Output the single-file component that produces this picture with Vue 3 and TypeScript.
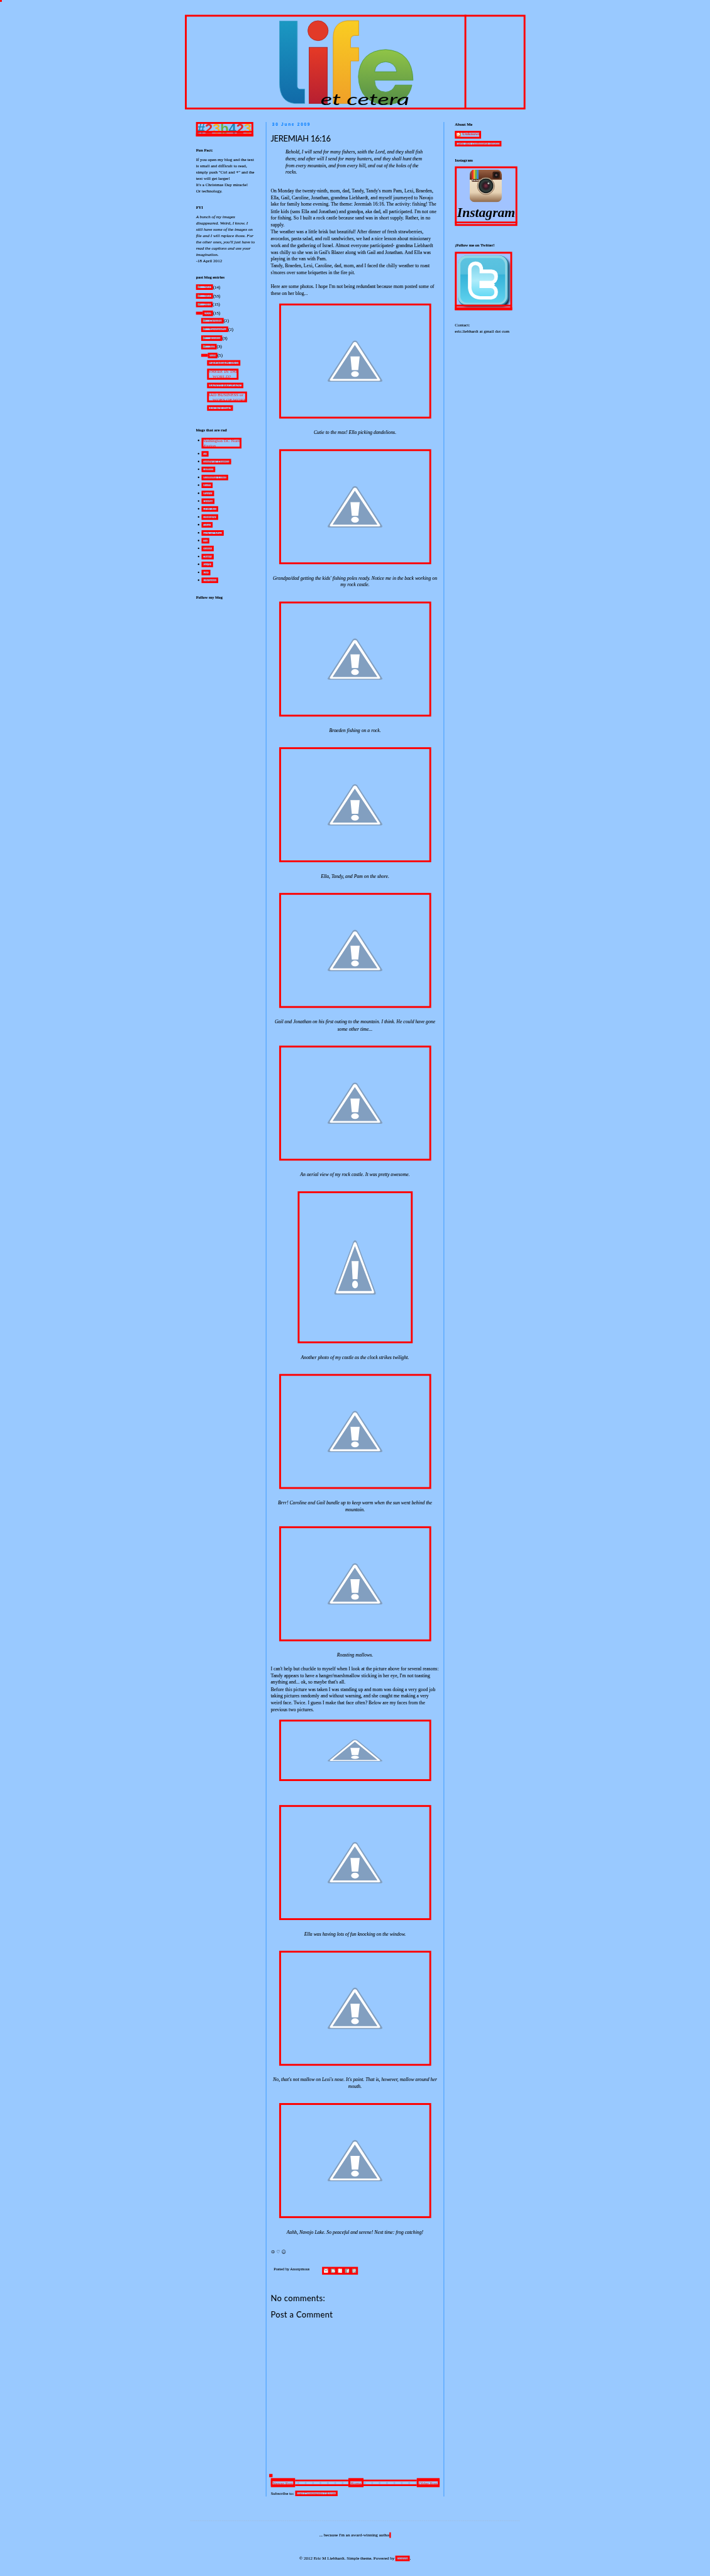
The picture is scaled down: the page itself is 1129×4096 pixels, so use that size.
<script setup lang="ts">
interface Entry {
  label: string[]
  count?: string
  indent: number
  width: number
  height?: number
  gap: number
  kind: 'closed' | 'open' | 'post'
}
interface Blog { name: string; width: number; gap: number; height?: number }
interface Photo { caption: string[]; width?: number; height?: number; last?: boolean }

const entries: Entry[] = [
  { label: ['2013'], count: '(14)', indent: 0, width: 46, gap: 0, kind: 'closed' },
  { label: ['2012'], count: '(53)', indent: 0, width: 46, gap: 9, kind: 'closed' },
  { label: ['2011'], count: '(15)', indent: 0, width: 45, gap: 8, kind: 'closed' },
  { label: ['2009'], count: '(15)', indent: 0, width: 28, gap: 9, kind: 'open' },
  { label: ['October'], count: '(2)', indent: 14, width: 61, gap: 5, kind: 'closed' },
  { label: ['September'], count: '(2)', indent: 14, width: 73, gap: 8, kind: 'closed' },
  { label: ['August'], count: '(3)', indent: 14, width: 57, gap: 9, kind: 'closed' },
  { label: ['July'], count: '(3)', indent: 14, width: 42, gap: 8, kind: 'closed' },
  { label: ['June'], count: '(5)', indent: 14, width: 26, gap: 9, kind: 'open' },
  { label: ['JEREMIAH 16:16'], indent: 30, width: 90, gap: 5, kind: 'post' },
  { label: ['WHERE IN THE', 'WORLD?'], indent: 30, width: 85, height: 30, gap: 8, kind: 'post' },
  { label: ['MANTI PAGEANT'], indent: 30, width: 98, gap: 8, kind: 'post' },
  { label: ['BAD BUSINESS or', 'WOES OF WORK'], indent: 30, width: 108, height: 29, gap: 9, kind: 'post' },
  { label: ['LUCKY DAY'], indent: 30, width: 70, gap: 8, kind: 'post' },
]

const blogs: Blog[] = [
  { name: 'Washington DC North Mission', width: 108, gap: 0, height: 29 },
  { name: "Em'", width: 19, gap: 7 },
  { name: "Tandy n' Damian", width: 80, gap: 6 },
  { name: 'Camille', width: 37, gap: 6 },
  { name: 'Momma Linda', width: 72, gap: 7 },
  { name: 'Molly', width: 30, gap: 6 },
  { name: 'Megan', width: 34, gap: 7 },
  { name: 'Kaylee', width: 35, gap: 6 },
  { name: "CJ n' KC", width: 45, gap: 6 },
  { name: 'Cristalyn', width: 45, gap: 7 },
  { name: 'Cristy', width: 30, gap: 6 },
  { name: "Jack n' Mary", width: 60, gap: 7 },
  { name: 'Lisa', width: 21, gap: 6 },
  { name: 'Donna', width: 33, gap: 6 },
  { name: 'Cheryl', width: 33, gap: 7 },
  { name: 'Becky', width: 31, gap: 6 },
  { name: 'Alex', width: 24, gap: 7 },
  { name: 'Adrienne', width: 45, gap: 6 },
]

const quote = [
  'Behold, I will send for many fishers, saith the Lord, and they shall fish',
  'them; and after will I send for many hunters, and they shall hunt them',
  'from every mountain, and from every hill, and out of the holes of the',
  'rocks.',
]
const story = [
  "On Monday the twenty-ninth, mom, dad, Tandy, Tandy's mom Pam, Lexi, Braeden,",
  'Ella, Gail, Caroline, Jonathan, grandma Liebhardt, and myself journeyed to Navajo',
  'lake for family home evening. The theme: Jeremiah 16:16. The activity: fishing! The',
  "little kids (sans Ella and Jonathan) and grandpa, aka dad, all participated. I'm not one",
  'for fishing. So I built a rock castle because sand was in short supply. Rather, in no',
  'supply.',
  'The weather was a little brisk but beautiful! After dinner of fresh strawberries,',
  'avocados, pasta salad, and roll sandwiches, we had a nice lesson about missionary',
  'work and the gathering of Israel. Almost everyone participated- grandma Liebhardt',
  "was chilly so she was in Gail's Blazer along with Gail and Jonathan. And Ella was",
  'playing in the van with Pam.',
  'Tandy, Braeden, Lexi, Caroline, dad, mom, and I faced the chilly weather to roast',
  "s'mores over some briquettes in the fire pit.",
  '',
  "Here are some photos. I hope I'm not being redundant because mom posted some of",
  'these on her blog...',
]
const chuckle = [
  "I can't help but chuckle to myself when I look at the picture above for several reasons:",
  "Tandy appears to have a hanger/marshmallow sticking in her eye, I'm not toasting",
  "anything and... ok, so maybe that's all.",
  'Before this picture was taken I was standing up and mom was doing a very good job',
  'taking pictures randomly and without warning, and she caught me making a very',
  'weird face. Twice. I guess I make that face often? Below are my faces from the',
  'previous two pictures.',
]
const firstPhotos: Photo[] = [
  { caption: ['Cutie to the max! Ella picking dandelions.'] },
  { caption: ["Grandpa/dad getting the kids' fishing poles ready. Notice me in the back working on", 'my rock castle.'] },
  { caption: ['Braeden fishing on a rock.'] },
  { caption: ['Ella, Tandy, and Pam on the shore.'] },
  { caption: ['Gail and Jonathan on his first outing to the mountain. I think. He could have gone', 'some other time...'] },
  { caption: ['An aerial view of my rock castle. It was pretty awesome.'] },
  { caption: ['Another photo of my castle as the clock strikes twilight.'], width: 311, height: 411 },
  { caption: ['Brrr! Caroline and Gail bundle up to keep warm when the sun went behind the', 'mountain.'] },
  { caption: ['Roasting mallows.'], last: true },
]
const lastPhotos: Photo[] = [
  { caption: [], height: 166 },
  { caption: ['Ella was having lots of fun knocking on the window.'] },
  { caption: ["No, that's not mallow on Lexi's nose. It's paint. That is, however, mallow around her", 'mouth.'] },
  { caption: ['Aahh, Navajo Lake. So peaceful and serene! Next time: frog catching!'], last: true },
]
const photoGroups = [firstPhotos, lastPhotos]
const pagerDots = Array.from({ length: 17 }, (_, i) => 74.5 + i * 20)
</script>

<template>
  <div class="viewport">
    <div class="page">
      <div class="corner"></div>

      <header class="banner">
        <div class="banner-link">
          <svg width="921" height="256" viewBox="500 40 921 256">
            <defs>
              <linearGradient id="gl" x1="0" y1="0" x2="0" y2="1"><stop offset="0" stop-color="#1b98c2" /><stop offset="1" stop-color="#116aa8" /></linearGradient>
              <linearGradient id="gi" x1="0" y1="0" x2="0" y2="1"><stop offset="0" stop-color="#e53a26" /><stop offset="1" stop-color="#b71f31" /></linearGradient>
              <linearGradient id="gf" x1="0" y1="0" x2="0" y2="1"><stop offset="0" stop-color="#f9cd22" /><stop offset="1" stop-color="#f0a028" /></linearGradient>
              <linearGradient id="ge" x1="0" y1="0" x2="0" y2="1"><stop offset="0" stop-color="#90c447" /><stop offset="1" stop-color="#548e47" /></linearGradient>
            </defs>
            <g class="logo">
              <path d="M756 57h48v177q1 7 8 7h12v39h-27q-41-4-41-55z" fill="url(#gl)" stroke="#3d9fca" stroke-width="1.5" />
              <rect x="836" y="128" width="49" height="152" fill="url(#gi)" stroke="#a91c22" stroke-width="1.5" />
              <ellipse cx="860" cy="83" rx="27.5" ry="27" fill="#e23a28" stroke="#b52a24" stroke-width="1.5" />
              <path d="M901 280V100q1-40 38-44h31v40h-12q-9 1-10 11v22h22v36h-22v115z" fill="url(#gf)" stroke="#d79b20" stroke-width="1.5" />
              <path fill-rule="evenodd" d="M1117 217h-104q1 31 30 32 18-1 26-19h45q-10 51-71 53-71-3-74-76 4-70 74-73 72 4 74 83zM1013 194h60q-4-25-30-27-27 2-30 27z" fill="url(#ge)" stroke="#4f9a3c" stroke-width="1.5" />
            </g>
            <text x="867" y="284" class="script" textLength="240" lengthAdjust="spacingAndGlyphs">et cetera</text>
          </svg>
          <i class="banner-rule"></i>
        </div>
      </header>

      <div class="columns">
        <aside class="left">
          <div class="badge ring-wide">
            <svg width="155" height="39" viewBox="0 0 155 39">
              <text x="4" y="31" class="hex" textLength="146" lengthAdjust="spacingAndGlyphs"><tspan fill="#1b83b5">#</tspan><tspan fill="#dc2a28">2</tspan><tspan fill="#f5b01f">3</tspan><tspan fill="#6dab41">b</tspan><tspan fill="#1b83b5">4</tspan><tspan fill="#dc2a28">2</tspan><tspan fill="#f5b01f">3</tspan></text>
              <rect x="0" y="24" width="155" height="5" fill="#f00" />
            </svg>
          </div>
          <h2 class="fun">Fun Fact:</h2>
          <div class="text">If you open my blog and the text<br>is small and difficult to read,<br>simply push "Ctrl and +" and the<br>text will get larger!<br>It's a Christmas Day miracle!<br>Or technology.</div>
          <h2 class="fyi">FYI</h2>
          <div class="text"><em>A bunch of my images<br>disappeared. Weird, I know. I<br>still have some of the images on<br>file and I will replace those. For<br>the other ones, you'll just have to<br>read the captions and use your<br>imagination.</em><br>-18 April 2012</div>
          <h2 class="past">past blog entries</h2>
          <div class="entries">
            <div v-for="(e, i) in entries" :key="i" class="entry" :style="{ marginTop: e.gap + 'px', paddingLeft: e.indent + 'px' }">
              <i v-if="e.kind === 'open'" class="open"></i>
              <span class="link" :class="{ end: e.kind !== 'post', two: e.label.length > 1 }" :style="{ width: e.width + 'px', height: (e.height ?? 15) + 'px' }">
                <i v-if="e.kind === 'closed'" class="arrow"></i>
                <span v-for="(l, j) in e.label" :key="j" class="line" :class="{ hang: j > 0 }">{{ l }}</span>
              </span>
              <span v-if="e.count" class="count">{{ e.count }}</span>
            </div>
          </div>
          <h2 class="rad">blogs that are rad</h2>
          <div class="blogs">
            <div v-for="b in blogs" :key="b.name" class="blog" :style="{ marginTop: b.gap + 'px' }">
              <i class="bullet"></i>
              <span class="link" :class="{ two: b.height, wrap: b.height }" :style="{ width: b.width + 'px', height: (b.height ?? 15) + 'px' }">{{ b.name }}</span>
            </div>
          </div>
          <h2 class="follow">Follow my blog</h2>
        </aside>

        <main class="center">
          <div class="date">30 June 2009</div>
          <h1 class="title">JEREMIAH 16:16</h1>
          <div class="quote"><div v-for="q in quote" :key="q">{{ q }}</div></div>
          <div class="story"><div v-for="(s, i) in story" :key="i">{{ s }}</div></div>
          <template v-for="(group, g) in photoGroups" :key="g">
            <div v-if="g === 1" class="chuckle"><div v-for="c in chuckle" :key="c">{{ c }}</div></div>
            <figure v-for="(p, i) in group" :key="i" :class="{ bare: !p.caption.length, last: p.last }">
              <div class="photo" :style="{ width: (p.width ?? 411) + 'px', height: (p.height ?? 311) + 'px' }">
                <svg width="100%" height="100%" viewBox="0 0 411 311" preserveAspectRatio="none">
                  <path d="M199 102.5q6-5 12 0L278 206q3 5-3 5.500H135q-6-.5-3-5.500z" fill="#829fc0" />
                  <path d="M200.500 106q4.500-4 9 0L272.500 204.500q2 4-2.500 4.300H140q-4.500-.3-2.500-4.300zM204.600 112L144.300 204h121.400z" fill="#fff" fill-rule="evenodd" />
                  <path d="M192.700 143h25l-4 37h-17.400z" fill="#fff" />
                  <ellipse cx="205" cy="190.7" rx="10.4" ry="7.8" fill="#fff" />
                </svg>
              </div>
              <figcaption v-if="p.caption.length"><div v-for="c in p.caption" :key="c">{{ c }}</div></figcaption>
            </figure>
          </template>
          <div class="symbols"><span>☮</span><span>♡</span><span>☺</span></div>
          <div class="byline">
            <span class="author">Posted by Anonymous</span>
            <span class="share">
              <svg width="97" height="21" viewBox="0 0 97 21">
                <g fill="#9b9b9b"><rect x="24" y="5" width="11" height="11" /><rect x="62" y="5" width="11" height="11" /><rect x="81" y="5" width="11" height="11" /></g>
                <rect x="5" y="5" width="11" height="11" fill="#f2f2f2" /><path d="M5 6l5.500 5L16 6" fill="none" stroke="#777" stroke-width="1.6" />
                <path d="M26 6.500h4.500q2.500 0 2.500 3 2 0 2 2 0 3.500-3 3.500h-3q-3 0-3-3zM28.500 9.200h2M28.500 12.500h3.500" fill="#fff" stroke="#999" />
                <rect x="43" y="5" width="11" height="11" fill="#dcdcdc" /><path d="M47 5v7q0 2 2 2h4M47 9h6" fill="none" stroke="#fff" stroke-width="2.4" />
                <path d="M69.500 16V9q0-2.200 3.500-2.200M67 11h6" fill="none" stroke="#fff" stroke-width="2" />
                <path d="M84.500 12q-1.500-5 2.500-5.400 4 .4 2.500 4-1.700 2.700-3 .4M87 9l-1.500 7" fill="none" stroke="#fff" stroke-width="1.5" />
              </svg>
            </span>
          </div>
          <h4>No comments:</h4>
          <h4>Post a Comment</h4>
          <div class="pager">
            <i class="blip"></i>
            <svg class="dots" width="457" height="18" viewBox="0 0 457 18">
              <g fill="#87b1e6"><circle v-for="x in pagerDots" :key="x" :cx="x" cy="9.5" r="2.7" /></g>
              <rect x="2.5" y="2.5" width="452" height="13" fill="none" stroke="#f00" stroke-width="5" />
            </svg>
            <span class="nav newer">Newer Post</span>
            <span class="nav home">Home</span>
            <span class="nav older">Older Post</span>
          </div>
          <div class="subscribe"><span>Subscribe to:</span><span class="link atom">Post Comments (Atom)</span></div>
        </main>

        <aside class="right">
          <h2>About Me</h2>
          <div class="link profile">
            <svg width="16" height="16" viewBox="0 0 16 16"><rect width="16" height="16" rx="2" fill="#ff6a00" /><path d="M4 3h5q3 0 3 4 1.500 0 1.500 2 0 4-3.500 4H6q-3 0-3-3V5z" fill="#fff" /><path d="M6 6h3M6 10h4.500" stroke="#ff6a00" stroke-width="1.4" /></svg>
            <b>Unknown</b>
          </div>
          <div class="link complete">View my complete profile</div>
          <h2 class="insta-title">Instagram</h2>
          <div class="insta">
            <svg width="169" height="161" viewBox="1230 450 169 161">
              <defs>
                <linearGradient id="cb" x1="0" y1="0" x2="0" y2="1"><stop offset="0" stop-color="#f3e8d3" /><stop offset=".7" stop-color="#e6d2b4" /><stop offset="1" stop-color="#8d6647" /></linearGradient>
                <linearGradient id="ct" x1="0" y1="0" x2="0" y2="1"><stop offset="0" stop-color="#9a6244" /><stop offset="1" stop-color="#5e2f1c" /></linearGradient>
                <radialGradient id="lens"><stop offset="0" stop-color="#843048" /><stop offset=".4" stop-color="#2a1a22" /><stop offset=".75" stop-color="#33423f" /><stop offset="1" stop-color="#0c0c0c" /></radialGradient>
                <clipPath id="cam"><rect x="1270" y="459" width="87" height="87.5" rx="13" /></clipPath>
              </defs>
              <rect x="1230" y="450" width="169" height="156" fill="#a1c3ff" />
              <g clip-path="url(#cam)">
                <rect x="1270" y="459" width="87" height="88" fill="url(#cb)" />
                <rect x="1270" y="459" width="87" height="27" fill="url(#ct)" />
                <rect x="1276" y="459" width="4.5" height="26" fill="#e8302e" /><rect x="1280.5" y="459" width="4.5" height="26" fill="#f7b52c" /><rect x="1285" y="459" width="4.5" height="26" fill="#5fbb55" /><rect x="1289.5" y="459" width="4.5" height="26" fill="#3d8ee0" />
              </g>
              <rect x="1276" y="484.5" width="18" height="7" rx="2" fill="#4d2c1d" />
              <text x="1277" y="490.5" class="insta-tag" textLength="16">Insta</text>
              <rect x="1332" y="464" width="20" height="19" rx="4" fill="#3a1f16" /><circle cx="1342" cy="473.5" r="7" fill="#161616" /><circle cx="1342" cy="473.5" r="3" fill="#6b4b50" />
              <circle cx="1314" cy="503" r="23" fill="#d8c8b0" stroke="#7c5a40" stroke-width="1.5" /><circle cx="1314" cy="502.5" r="20" fill="url(#lens)" /><circle cx="1321" cy="496" r="2.5" fill="#c5cfc9" />
              <text x="1236" y="587" class="insta-word" textLength="157" lengthAdjust="spacingAndGlyphs">Instagram</text>
              <path d="M1230 601.500h169" stroke="#f00" stroke-width="5" />
            </svg>
          </div>
          <h2 class="twitter-title">¡Follow me on Twitter!</h2>
          <div class="twitter ring-wide">
            <svg width="155" height="158" viewBox="1230 681 155 158">
              <defs>
                <linearGradient id="tb" x1="0" y1="0" x2="0" y2="1"><stop offset="0" stop-color="#5cc3e0" /><stop offset=".35" stop-color="#55bfde" /><stop offset=".38" stop-color="#35b2d8" /><stop offset="1" stop-color="#5fd2ee" /></linearGradient>
                <linearGradient id="tt" x1="0" y1="0" x2="0" y2="1"><stop offset="0" stop-color="#7fd3ea" /><stop offset=".5" stop-color="#aeecfb" /><stop offset="1" stop-color="#66daf5" /></linearGradient>
                <filter id="soft"><feGaussianBlur stdDeviation="2.5" /></filter>
              </defs>
              <rect x="1230" y="681" width="155" height="150" fill="#a1c3ff" />
              <rect x="1244" y="697" width="134" height="134" rx="22" fill="#0c2b45" filter="url(#soft)" />
              <rect x="1238" y="691" width="137" height="136" rx="24" fill="#2b89a8" />
              <rect x="1238" y="691" width="134" height="133" rx="23" fill="#8fd6e6" />
              <rect x="1245" y="698" width="121" height="121" rx="18" fill="url(#tb)" />
              <path d="M1286 707q20 1 20.500 22h23q17 2 17 18 0 17-16 22.500 16 5 16 20 0 18-18 20.500h-30q-30-2-33-31v-52q2-19 20.500-20z" fill="#fff" />
              <path d="M1286 717q10 1 11 12v10h30q10 1 10 10.500T1327 760h-30v19h30q10 1 10 11t-10 11h-27q-23-1-25-22v-51q1-10 11-11z" fill="url(#tt)" />
              <path d="M1297 760h30l12 9.500-12 9.500h-30z" fill="#fff" />
              <path d="M1230 826.500h155" stroke="#f00" stroke-width="5" />
            </svg>
          </div>
          <div class="text contact">Contact:<br>eric.liebhardt at gmail dot com</div>
        </aside>
      </div>

      <footer>
        <div class="award">... because I'm an award-winning author<i class="cursor"></i></div>
        <div class="credit"><span>© 2012 Eric M Liebhardt. Simple theme. Powered by</span><span class="link blogger">Blogger</span><span>.</span></div>
      </footer>
    </div>
  </div>
</template>

<style>
html, body { background: #99c9ff; margin: 0; }
</style>

<style scoped>
.viewport { width: 1129px; height: 4096px; overflow: hidden; background: #99c9ff; }
.page {
  width: 1920px; height: 6967px; transform: scale(0.58802, 0.58791); transform-origin: 0 0;
  font: 12px/16.8px "Liberation Serif", serif; color: #000; white-space: nowrap; position: relative;
  -webkit-text-stroke: .15px currentColor;
}
svg { display: block; -webkit-text-stroke: 0; }
h1, h2, h4, figure { margin: 0; }
h2 { font-size: 11px; line-height: 13px; margin-bottom: 11px; }
.corner { position: absolute; left: 0; top: 0; width: 5px; height: 5px; background: #f00; }

.banner { padding: 40px 0 34px 500px; }
.banner-link { position: relative; width: 921px; height: 256px; outline: 5px solid #f00; outline-offset: -5px; }
.banner-rule { position: absolute; left: 756px; top: 0; width: 5px; height: 256px; background: #f00; }
.script { font: italic 400 41px Lato, sans-serif; }

.columns { display: flex; height: 6422px; margin-left: 530px; }
.left { width: 189px; flex: none; }
.ring-wide { position: relative; outline: 5px solid #f00; outline-offset: -5px; }
.badge { width: 155px; height: 39px; box-sizing: border-box; border-bottom: 8px solid #f00; overflow: hidden; }
.hex { font: bold 36px "Liberation Sans", sans-serif; }
.fun { margin-top: 31px; }
.fyi { margin-top: 30.2px; }
.past { margin-top: 29.6px; }
.rad { margin-top: 46px; }
.follow { margin-top: 33px; }
.entries { padding-top: 2px; }
.entry { display: flex; align-items: flex-start; }
.link {
  display: block; box-sizing: border-box; height: 15px; line-height: 15.9px; overflow: hidden;
  color: #e23838; outline: 5px solid #f00; outline-offset: -5px; position: relative;
}
.link.end { display: flex; justify-content: flex-end; }
.link.two { line-height: 14.3px; padding-top: .7px; }
.link.wrap { white-space: normal; }
.line { display: block; }
.hang { padding-left: 15px; }
.count { line-height: 15.9px; height: 15px; }
.open { width: 18px; height: 8px; margin-top: 3px; background: #f00; }
.arrow { position: absolute; left: 5px; top: 3.5px; border-left: 9px solid #8d9b9b; border-top: 4px solid transparent; border-bottom: 4px solid transparent; }
.blogs { padding-top: 3px; }
.blog { display: flex; align-items: flex-start; padding-left: 5px; }
.bullet { width: 4px; height: 4px; margin: 5.5px 6px 0 0; border-radius: 50%; background: #000; }

.center { width: 482px; flex: none; box-sizing: border-box; border: solid #007cff; border-width: 0 1px; padding: 0 12px; font-size: 13.2px; line-height: 18.48px; }
.date { padding: 1px 0 0 4px; height: 32px; box-sizing: border-box; font: bold 11px/13px "Liberation Sans", sans-serif; letter-spacing: 3px; color: #007cff; }
.title, h4 { font: 400 22px/26px Lato, sans-serif; }
.title { letter-spacing: -.5px; height: 39.6px; }
.quote { padding-left: 40px; font-style: italic; height: 105.7px; }
.story { height: 313.7px; }
.story > div, .chuckle > div { height: 18.48px; }
figure { display: flex; flex-direction: column; align-items: center; padding-bottom: 35.7px; font-style: italic; text-align: center; }
figure.bare { padding-bottom: 65px; }
figure.last { padding-bottom: 18px; }
.photo { outline: 5px solid #f00; outline-offset: -5px; margin-left: 1px; }
figcaption { padding-top: 28.8px; }
.chuckle { height: 146.5px; }
.symbols { display: flex; height: 66.5px; box-sizing: border-box; padding: 17px 0 0 1px; font-family: "DejaVu Sans", sans-serif; font-size: 12px; -webkit-text-stroke: 0; }
.symbols span { width: 14px; }
.byline { display: flex; padding-left: 8px; height: 71px; }
.author { font-size: 10.8px; line-height: 13px; width: 131px; }
.share { width: 97px; height: 21px; background: #f00; }
h4 { letter-spacing: .6px; height: 44.5px; }
.pager { position: relative; height: 25px; margin-top: 411px; font-size: 12px; }
.dots { position: absolute; left: 0; top: 4px; }
.blip { position: absolute; left: -4px; top: -11px; width: 9px; height: 9px; background: #f00; }
.nav { position: absolute; top: 0; height: 25px; line-height: 11px; text-align: center; box-sizing: border-box; background: #99c9ff; color: #e23838; border: solid #f00; border-width: 9px 5px 8px; }
.newer { left: 0; width: 66px; }
.home { left: 210px; width: 41px; }
.older { right: -1px; width: 62px; }
.subscribe { display: flex; margin-top: 9px; font-size: 12px; line-height: 15.9px; }
.subscribe > span:first-child { width: 66px; }
.atom { width: 115px; }

.right { padding: 1px 0 0 29px; }
.right h2 { margin-bottom: 10px; }
.profile { width: 71px; height: 21px; display: flex; gap: 4px; line-height: 16px; }
.complete { width: 126px; margin-top: 6px; }
.right .insta-title { margin-top: 30.5px; margin-bottom: 10.5px; }
.insta { width: 169px; height: 161px; outline: 5px solid #f00; outline-offset: -5px; }
.insta-word { font: italic bold 37px "Liberation Serif", serif; }
.insta-tag { font: bold 6px "Liberation Serif", serif; fill: #fff; }
.right .twitter-title { margin-top: 46px; margin-bottom: 11px; }
.twitter { width: 155px; height: 158px; box-sizing: border-box; border-bottom: 8px solid #f00; overflow: hidden; }
.contact { margin-top: 31px; }

footer { margin: 65px 515px 0; border-top: 1px dashed #a9b9cc; text-align: center; }
.award { margin-top: 30px; height: 64px; display: flex; justify-content: center; align-items: flex-start; }
.cursor { width: 4px; height: 15px; margin: 1px 0 0 -3px; background: #f00; }
.credit { display: flex; justify-content: center; line-height: 15.9px; }
.blogger { width: 39px; margin-left: 2px; }
</style>
